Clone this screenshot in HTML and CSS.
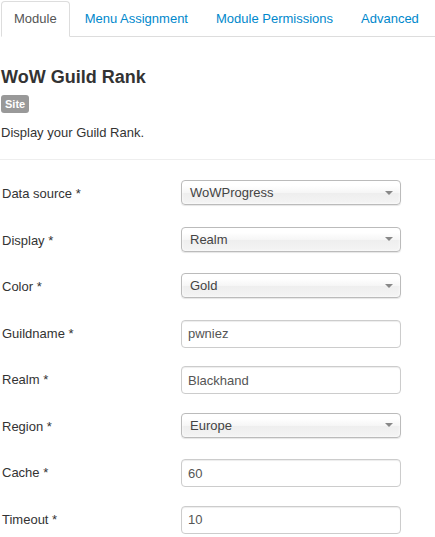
FILE: index.html
```html
<!DOCTYPE html>
<html lang="en">
<head>
<meta charset="utf-8">
<title>WoW Guild Rank</title>
<link rel="stylesheet" href="styles.css">
</head>
<body>
<div class="page">
  <ul class="tabs">
    <li class="tab active"><a href="#">Module</a></li>
    <li class="tab"><a href="#">Menu Assignment</a></li>
    <li class="tab"><a href="#">Module Permissions</a></li>
    <li class="tab"><a href="#">Advanced</a></li>
  </ul>

  <h2 class="title">WoW Guild Rank</h2>
  <div class="meta"><span class="badge">Site</span></div>
  <p class="desc">Display your Guild Rank.</p>
  <hr class="divider">

  <form class="form">
    <label class="label">Data source *</label>
    <div class="select"><span class="select-text">WoWProgress</span><span class="caret"></span></div>

    <label class="label">Display *</label>
    <div class="select"><span class="select-text">Realm</span><span class="caret"></span></div>

    <label class="label">Color *</label>
    <div class="select"><span class="select-text">Gold</span><span class="caret"></span></div>

    <label class="label">Guildname *</label>
    <input class="input" type="text" value="pwniez">

    <label class="label">Realm *</label>
    <input class="input" type="text" value="Blackhand">

    <label class="label">Region *</label>
    <div class="select"><span class="select-text">Europe</span><span class="caret"></span></div>

    <label class="label">Cache *</label>
    <input class="input" type="text" value="60">

    <label class="label">Timeout *</label>
    <input class="input" type="text" value="10">
  </form>
</div>
</body>
</html>
```

FILE: styles.css
```css
* {
  box-sizing: border-box;
}

html, body {
  margin: 0;
  padding: 0;
  background: #ffffff;
}

body {
  font-family: "Liberation Sans", Arial, sans-serif;
  font-size: 13px;
  line-height: 18px;
  color: #333333;
}

.page {
  padding: 1px 0 0 1px;
}

.tabs {
  list-style: none;
  margin: 0;
  padding: 0;
  display: flex;
  border-bottom: 1px solid #dddddd;
}

.tab {
  margin-right: 2px;
  margin-bottom: -1px;
}

.tab a {
  display: block;
  padding: 8px 12px;
  line-height: 18px;
  border: 1px solid transparent;
  border-radius: 4px 4px 0 0;
  color: #0088cc;
  text-decoration: none;
}

.tab.active a {
  color: #555555;
  background: #ffffff;
  border-color: #dddddd #dddddd transparent;
}

.title {
  margin: 30px 0 0;
  font-size: 18px;
  line-height: 20px;
  font-weight: bold;
  color: #333333;
}

.meta {
  display: flex;
  margin-top: 8px;
}

.badge {
  display: block;
  padding: 2px 4px;
  font-size: 11px;
  line-height: 14px;
  font-weight: bold;
  color: #ffffff;
  background: #999999;
  border-radius: 3px;
}

.desc {
  margin: 11px 0 0;
  line-height: 18px;
}

.divider {
  margin: 17px 0 0 -1px;
  border: 0;
  border-top: 1px solid #eeeeee;
  height: 0;
}

.form {
  display: grid;
  grid-template-columns: 180px 220px;
  grid-auto-rows: 28px;
  row-gap: 18.57px;
  align-items: center;
  margin-top: 20px;
}

.label {
  padding-left: 1px;
  color: #333333;
}

.select {
  align-self: start;
  display: flex;
  align-items: center;
  justify-content: space-between;
  height: 25px;
  padding: 0 7px 0 8px;
  border: 1px solid #bbbbbb;
  border-radius: 4px;
  background: linear-gradient(#ffffff 20%, #f6f6f6 50%, #eeeeee 52%, #f4f4f4 100%);
  box-shadow: inset 0 0 3px #ffffff, 0 1px 1px rgba(0, 0, 0, 0.1);
  color: #444444;
}

.select-text {
  line-height: 23px;
}

.caret {
  width: 0;
  height: 0;
  border-left: 4px solid transparent;
  border-right: 4px solid transparent;
  border-top: 4px solid #888888;
}

.input {
  display: block;
  width: 220px;
  height: 28px;
  margin: 0;
  padding: 4px 6px;
  font-family: inherit;
  font-size: 13px;
  line-height: 18px;
  color: #555555;
  background: #ffffff;
  border: 1px solid #cccccc;
  border-radius: 4px;
  box-shadow: inset 0 1px 1px rgba(0, 0, 0, 0.075);
  outline: none;
}
```
